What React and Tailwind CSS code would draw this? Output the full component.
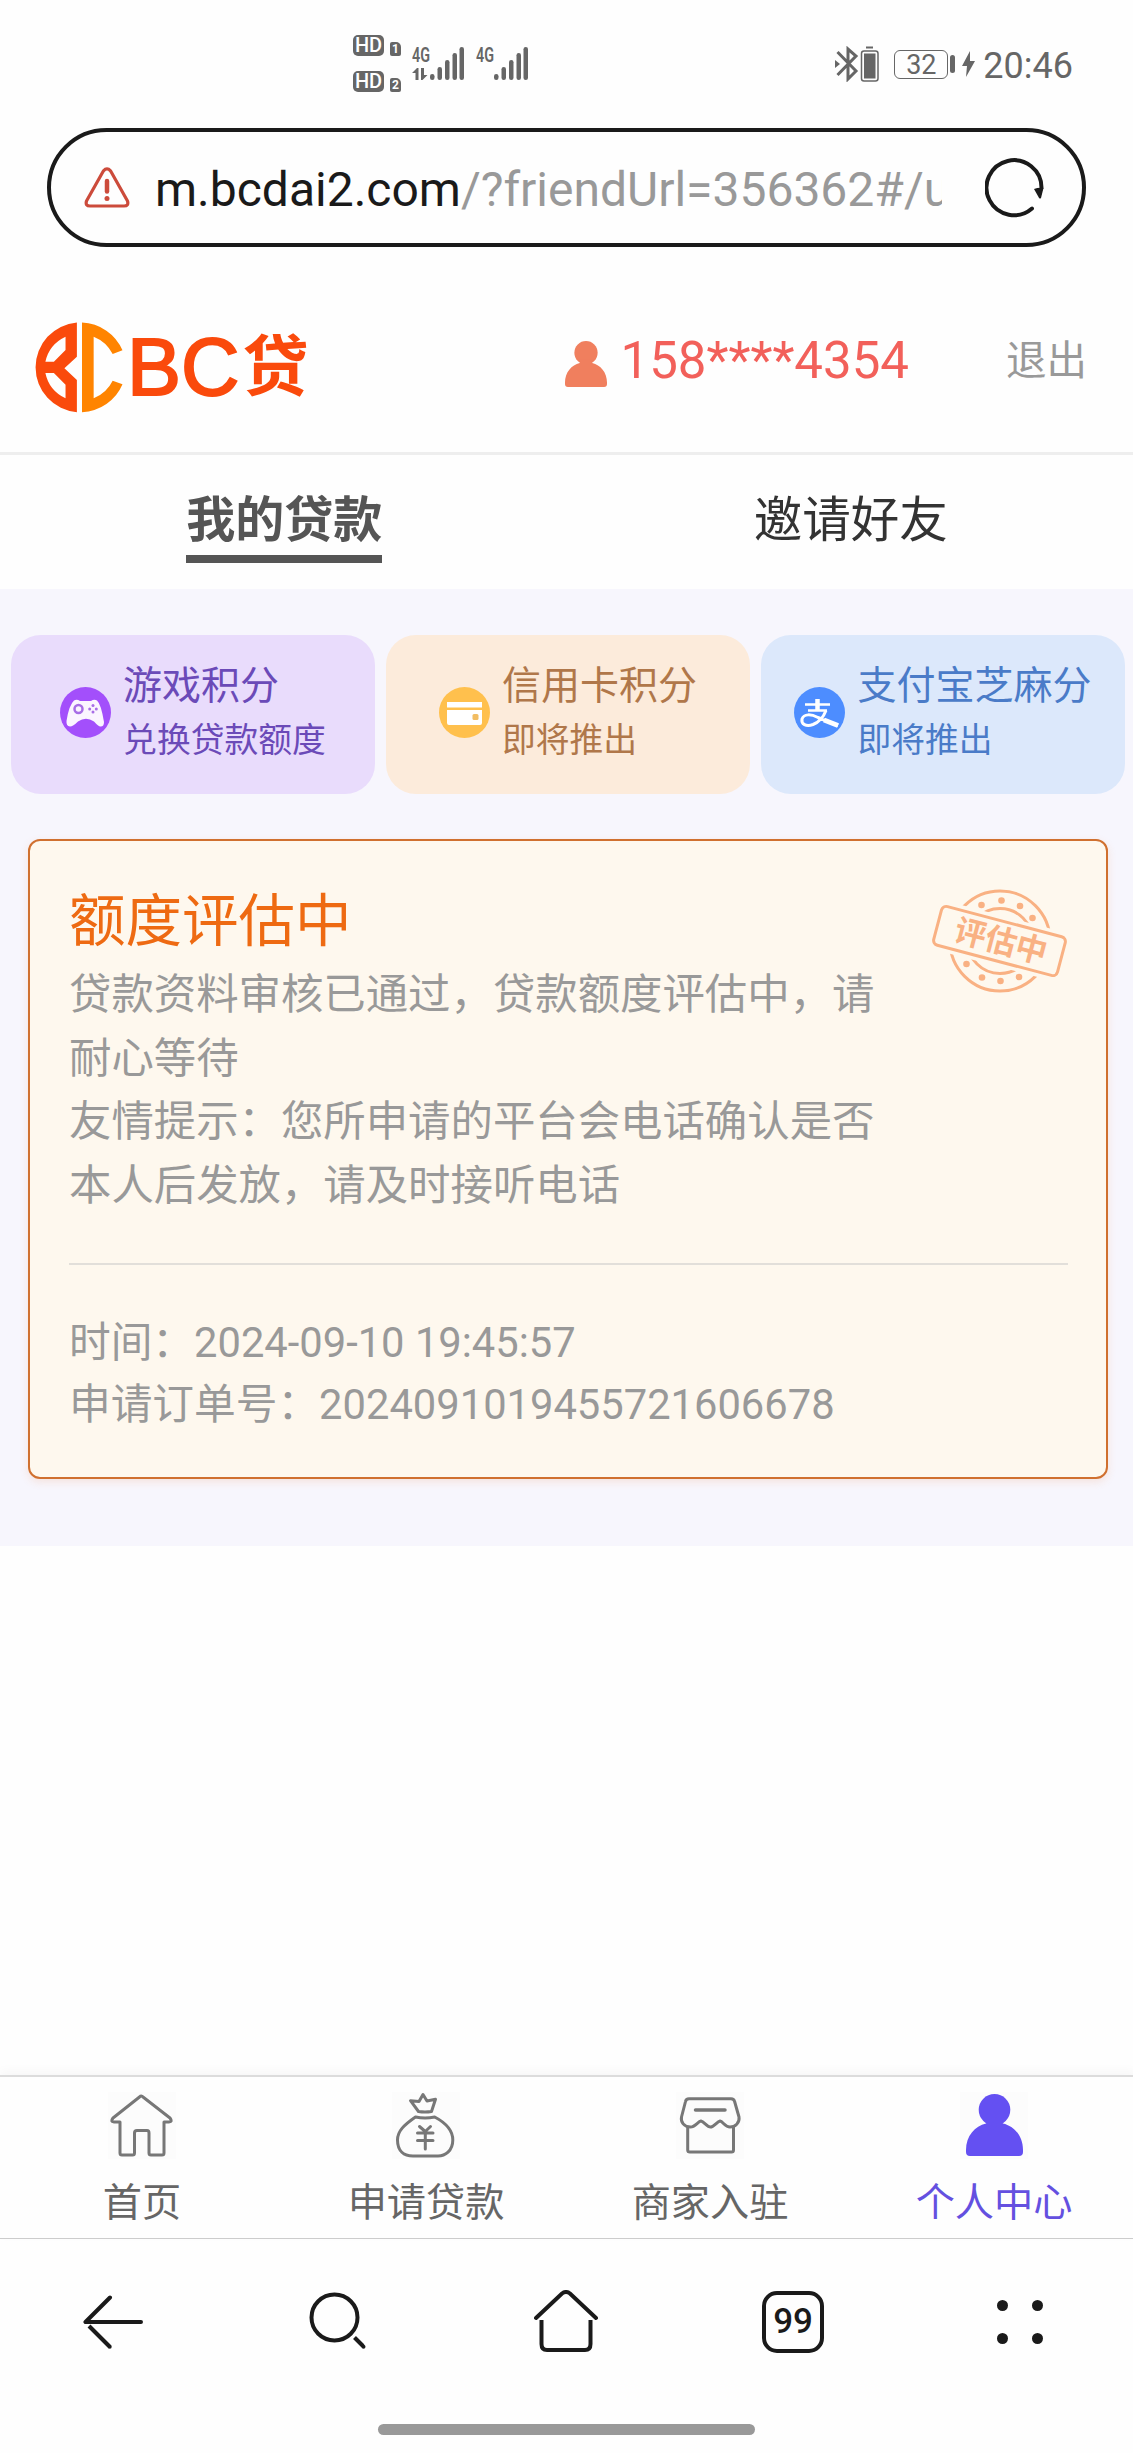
import React from 'react';

const POINT_CARDS = [
  { title: '游戏积分', desc: '兑换贷款额度', icon: 'game', className: 'bg-[#e9dcfc] text-[#6b4ab8]' },
  { title: '信用卡积分', desc: '即将推出', icon: 'card', className: 'bg-[#fcebdb] text-[#b0774a]' },
  { title: '支付宝芝麻分', desc: '即将推出', icon: 'alipay', className: 'bg-[#dce8fb] text-[#4a7bc8]' },
];

const NAV_ITEMS = [
  { label: '首页', icon: 'home' },
  { label: '申请贷款', icon: 'bag' },
  { label: '商家入驻', icon: 'store' },
  { label: '个人中心', icon: 'user', active: true },
];

const PersonIcon = ({ className }) => (
  <svg viewBox="0 0 57 62" preserveAspectRatio="none" fill="currentColor" className={className}>
    <circle cx="28.5" cy="15.8" r="15.8" />
    <path d="M0 56C0 42 9 32 20 29.500Q22 28 20 25H37Q35 28 37 29.500C48 32 57 42 57 56V58Q57 62 53 62H4Q0 62 0 58Z" />
  </svg>
);

const SimBadge = ({ n }) => (
  <div className="flex items-end gap-[6px] h-[21px]">
    <span className="w-[31px] h-[21px] rounded-[5px] bg-[#666] text-white text-[20px] leading-[21px] font-medium text-center">HD</span>
    <span className="w-[11px] h-[14px] rounded-[2px] rounded-tr-[5px] bg-[#666] text-white text-[12px] leading-[14px] font-bold text-center">{n}</span>
  </div>
);

const Signal = ({ data }) => (
  <svg width="53" height="40" viewBox="0 -4 53 40" fill="#666">
    <text x="0" y="16" fontSize="20" fontWeight="600" textLength="18" lengthAdjust="spacingAndGlyphs">4G</text>
    {data && <path d="M0 27L5 22H6.500V34H3.500V27ZM9 22H12V29H15.500L10.500 34H9Z" />}
    <rect x="18" y="28" width="4.500" height="6" rx="2.200" />
    <rect x="25.500" y="21" width="4.500" height="13" rx="2.200" />
    <rect x="33" y="14" width="4.500" height="20" rx="2.200" />
    <rect x="40.500" y="7" width="4.500" height="27" rx="2.200" />
    <rect x="47.500" y="1" width="4.500" height="33" rx="2.200" />
  </svg>
);

const StatusBar = () => (
  <div className="h-[128px] flex items-start justify-between pl-[353px] pr-[60px] text-[#666]">
    <div className="flex pt-[35px]">
      <div className="flex flex-col gap-[15px]">
        <SimBadge n="1" />
        <SimBadge n="2" />
      </div>
      <div className="flex items-start gap-[11px] pt-[7px] pl-[11px]">
        <Signal data />
        <Signal />
      </div>
    </div>
    <div className="flex items-center h-[128px]">
      <svg width="44" height="36" viewBox="0 0 44 36" fill="none" stroke="#666">
        <path d="M2.500 6L21 25L13 33V3L21 10L2.500 29" strokeWidth="3" />
        <path d="M0 14L5 18L0 22Z" fill="#666" stroke="none" />
        <path d="M31 1.500H38" strokeWidth="2" />
        <rect x="26.500" y="5" width="16.500" height="30" rx="2.500" strokeWidth="1.500" />
        <rect x="29" y="7.500" width="11.500" height="25" fill="#666" stroke="none" />
      </svg>
      <div className="ml-[15px] w-[54px] h-[29px] rounded-[6px] border-[1.5px] border-[#666] text-[27px] leading-[28px] text-center">32</div>
      <div className="ml-[2px] w-[5px] h-[18px] rounded-full bg-[#666]" />
      <svg width="13" height="26" viewBox="0 0 13 26" fill="#666" className="ml-[7px]">
        <path d="M8 0L0 15H5L4 26L13 10H8Z" />
      </svg>
      <span className="ml-[8px] text-[36px] leading-[36px] mt-[4px]">20:46</span>
    </div>
  </div>
);

const AddressBar = () => (
  <div className="mx-[47px] h-[119px] rounded-full border-4 border-[#1a1a1a] flex items-center pl-[33px] pr-[37px]">
    <svg width="46" height="41" viewBox="0 0 46 41" fill="none" stroke="#cc4b3b" strokeWidth="3.200" strokeLinejoin="round" strokeLinecap="round">
      <path d="M19.500 3.800Q23 0 26.500 3.800L43.500 34Q45 39 40 39H6Q1 39 2.500 34Z" />
      <path d="M23 14V24.500" strokeWidth="4.500" />
      <circle cx="23" cy="31.500" r="2.500" fill="#cc4b3b" stroke="none" />
    </svg>
    <div className="ml-[25px] mt-[4px] w-[787px] overflow-hidden whitespace-nowrap text-[48px] leading-[60px] text-[#999]">
      <span className="text-[#1a1a1a]">m.bcdai2.com</span>/?friendUrl=356362#/u
    </div>
    <svg width="60" height="60" viewBox="0 0 60 60" fill="none" className="ml-auto shrink-0">
      <path d="M47 50.500A27.500 27.500 0 1 1 56.500 30" stroke="#1a1a1a" strokeWidth="4" strokeLinecap="round" />
      <path d="M49 31Q54 29 58.500 30L56 40Q54.500 41.500 53.500 39Z" fill="#1a1a1a" />
    </svg>
  </div>
);

const Logo = () => (
  <div className="flex items-center h-[91px] text-[#fa4a0c]">
    <svg width="91" height="91" viewBox="0 0 89 91" preserveAspectRatio="none" className="mt-[2px]">
      <path fillRule="evenodd" fill="#fa4a0c" d="M43.900 .5V34.700L31.700 46.300L43.900 58V90.200A44 45 0 0 1 43.900 .5ZM32.800 14.700A36 36 0 0 0 13.100 39.700H21.400L32.800 28ZM13.100 51H21.400L32.800 62.700V76.300A36 36 0 0 1 13.100 51Z" />
      <path fill="#ff8400" d="M48.900 .5A45 45 0 0 1 88.500 28.300L78.900 32A36 36 0 0 0 60.300 14.700V76.300A36 36 0 0 0 78.900 58.700L88.500 62.300A45 45 0 0 1 48.900 90.200Z" />
    </svg>
    <span className="ml-[4px] font-['Liberation_Sans'] text-[81px] leading-[90px] [-webkit-text-stroke:2px_#fa4a0c]">BC</span>
    <span className="ml-[3px] mb-[11px] font-['Noto_Sans_CJK_SC'] font-bold text-[66px] leading-[90px]">贷</span>
  </div>
);

const Header = () => (
  <div className="h-[208px] border-b-[3px] border-[#eee] flex items-start pl-[32px] pr-[46px] pt-[74px]">
    <Logo />
    <div className="flex ml-auto items-center h-[80px]">
      <PersonIcon className="w-[42px] h-[46px] text-[#f07f5e] mt-[5px]" />
      <span className="ml-[14px] text-[51px] leading-[60px] text-[#f2605a]">158****4354</span>
    </div>
    <span className="ml-[97px] text-[40.5px] leading-[80px] text-[#999]">退出</span>
  </div>
);

const Tabs = () => (
  <div className="h-[134px] grid grid-cols-2 justify-items-center pl-[2px] pt-[34px] text-[49px] leading-[60px]">
    <span className="h-[74px] pt-[2px] -ml-px border-b-8 border-[#555] text-[#555] font-bold">我的贷款</span>
    <span className="text-[#333] pt-[2px] pl-px text-[48.5px]">邀请好友</span>
  </div>
);

const PointIcon = ({ name }) => {
  if (name === 'game') {
    return (
      <svg width="51" height="51" viewBox="0 0 51 51" className="shrink-0">
        <circle cx="25.500" cy="25.500" r="25.500" fill="#a34ffb" />
        <path d="M14 13.500Q17 12 20 14H31Q34 12 37 13.500Q41 17 44 35Q44 40 40 39.500Q38 39 34 34.500Q26 29 18 34.500Q13 39.500 10 39.500Q6 39 6.500 34Q9 18 14 13.500Z" fill="#fbf5ff" />
        <circle cx="18.500" cy="22" r="4" fill="none" stroke="#a86ee6" strokeWidth="2.500" />
        <g fill="#a86ee6">
          <circle cx="33" cy="18.500" r="1.500" />
          <circle cx="33" cy="25" r="1.500" />
          <circle cx="29.700" cy="22" r="1.500" />
          <circle cx="36.300" cy="22" r="1.500" />
        </g>
      </svg>
    );
  }
  if (name === 'card') {
    return (
      <svg width="51" height="51" viewBox="0 0 51 51" className="shrink-0">
        <circle cx="25.500" cy="25.500" r="25.500" fill="#ffc04d" />
        <path d="M8 15H43V20.500H8ZM8 23H43V36Q43 38 41 38H10Q8 38 8 36Z" fill="#fff" />
        <rect x="33.500" y="27" width="6" height="6" rx="1.500" fill="#f2bd62" />
      </svg>
    );
  }
  return (
    <svg width="51" height="51" viewBox="0 0 51 51" className="shrink-0">
      <circle cx="25.500" cy="25.500" r="25.500" fill="#4d8dff" />
      <g fill="none" stroke="#fff">
        <path d="M11 17.500H36M14 23.500H33" strokeWidth="2.500" />
        <path d="M23.500 12V23" strokeWidth="4.500" />
        <path d="M32 23.500Q28 34 19 37.500C12 40 7 37 8 32C10 26.500 17 27 24 30.500Q30 33 44 38.500" strokeWidth="3" />
        <path d="M30 33L44 38.500" strokeWidth="5" />
      </g>
    </svg>
  );
};

const PointCard = ({ card }) => (
  <div className={`h-[159px] rounded-[30px] flex items-center justify-center gap-[12px] pb-[5px] whitespace-nowrap ${card.className}`}>
    <PointIcon name={card.icon} />
    <div className="pt-px">
      <p className="text-[39px] leading-[56px]">{card.title}</p>
      <p className="text-[33.8px] leading-[54px]">{card.desc}</p>
    </div>
  </div>
);

const Stamp = () => (
  <svg width="138" height="104" viewBox="-1 -1 138 104" fill="none" stroke="#f9b183" strokeWidth="3" className="mt-[48px] mr-[-1px]">
    <circle cx="68" cy="51" r="50" />
    <circle cx="68" cy="51" r="32.500" />
    <g fill="#f9b183" stroke="none">
      <circle cx="49.500" cy="15" r="3.300" />
      <circle cx="69.500" cy="10.500" r="3.300" />
      <circle cx="88" cy="16" r="3.300" />
      <circle cx="100.500" cy="28" r="3.300" />
      <circle cx="34.500" cy="74" r="3.300" />
      <circle cx="50" cy="87.500" r="3.300" />
      <circle cx="68.500" cy="91" r="3.300" />
      <circle cx="87" cy="87" r="3.300" />
    </g>
    <g transform="rotate(14.8 67.500 51)">
      <rect x="0" y="26" width="135" height="50" fill="#fef8ee" stroke="none" />
      <rect x="3.500" y="31" width="128" height="40" rx="5" />
      <text x="69" y="62" fontSize="31.500" fontWeight="700" textAnchor="middle" fill="#f9b183" stroke="none">评估中</text>
    </g>
  </svg>
);

const OrderCard = () => (
  <div className="mt-[45px] ml-[28px] mr-[25px] h-[640px] rounded-[12px] border-2 border-[#d0702f] bg-[#fef8ee] shadow-[0_3px_8px_rgba(240,120,40,0.15)] pl-[39px] pr-[38px]">
    <div className="flex justify-between h-[424px] border-b-2 border-[#e2dfda]">
      <div className="w-[808px] pt-[43px]">
        <h2 className="text-[56.500px] leading-[76px] text-[#ee6a12]">额度评估中</h2>
        <div className="mt-[3px] text-[42.4px] leading-[63.6px] text-[#999]">
          <p>贷款资料审核已通过，贷款额度评估中，请耐心等待</p>
          <p>友情提示：您所申请的平台会电话确认是否本人后发放，请及时接听电话</p>
        </div>
      </div>
      <Stamp />
    </div>
    <div className="pt-[47px] text-[41.7px] leading-[62px] text-[#999]">
      <p>时间：2024-09-10 19:45:57</p>
      <p>申请订单号：2024091019455721606678</p>
    </div>
  </div>
);

const NavIcon = ({ name }) => {
  if (name === 'user') {
    return (
      <div className="w-[68px] h-[67px] bg-[#fcfcfc] flex justify-center pt-[2px]">
        <PersonIcon className="w-[57px] h-[62px] text-[#6450f2]" />
      </div>
    );
  }
  return (
    <svg width="68" height="67" viewBox="0 0 68 67" fill="none" stroke="#777" strokeWidth="3" strokeLinejoin="round" strokeLinecap="round" className="bg-[#fcfcfc]">
      {name === 'home' && (
        <path d="M31.500 5Q33.300 3 35 5L62 26Q65 30 61 30H56V61Q56 63 54 63H43Q41 63 41 61V41Q41 38.500 39 38.500H29Q26.500 38.500 26.500 41V61Q26.500 63 24.500 63H14Q12 63 12 61V30H6Q2 30 5 26Z" />
      )}
      {name === 'bag' && (
        <>
          <path d="M31 2.500L35 9L43.500 7.300L39.500 19.500Q33 20.500 26.500 19.500L18.500 8.700L27 9.500Z" />
          <path d="M23.500 25Q33 27 42.700 25C54 31 60.800 39 60.800 48C60.800 59 53 64 46 64H21C12 64 5.500 59 5.500 48C5.500 39 12 33 23.500 25Z" />
          <path d="M27.500 34.500L33.300 39.500L38.500 34.500M25.500 41H41M25.500 48.500H41M33.300 40V57" />
        </>
      )}
      {name === 'store' && (
        <>
          <path d="M13 6.700H55Q58 6.700 58.600 9.500L63 25C64 31 59 35 54 35C49 35 47 29.500 44 29C41 29.500 38 35 34.400 35C31 35 28 29.500 25 29C22 29.500 19 35 14.500 35C8 35 4.500 30 5.500 25L9.500 9.500Q10 6.700 13 6.700Z" />
          <path d="M11.700 35V58Q11.700 60 14 60H55.500Q57.500 60 57.500 58V35" />
          <path d="M19.500 18H49" strokeWidth="3.500" />
        </>
      )}
    </svg>
  );
};

const BottomNav = () => (
  <div className="h-[164px] border-t-2 border-b border-t-[#dcdcdc] border-b-[#ccc] shadow-[0_-4px_10px_rgba(0,0,0,0.03)] grid grid-cols-4 -mr-[3px] pt-[15px] text-[39.2px] leading-[54px]">
    {NAV_ITEMS.map((item) => (
      <div key={item.label} className={`flex flex-col items-center gap-[17px] ${item.active ? 'text-[#6450e0]' : 'text-[#666]'}`}>
        <NavIcon name={item.icon} />
        <span>{item.label}</span>
      </div>
    ))}
  </div>
);

const BrowserBar = () => (
  <div className="h-[165px] grid grid-cols-5 justify-items-center items-center text-[#1a1a1a]">
    <svg width="60" height="55" viewBox="0 0 60 55" fill="none" stroke="currentColor" strokeWidth="4" className="mt-[2px]">
      <path d="M27 2.500L2.500 27H58" strokeLinecap="round" strokeLinejoin="round" />
      <path d="M6 31L27 52" />
      <circle cx="26.800" cy="51.800" r="1.900" fill="currentColor" stroke="none" />
    </svg>
    <svg width="58" height="59" viewBox="0 0 58 59" fill="none" stroke="currentColor" strokeWidth="4" className="mr-[4px]">
      <circle cx="25.500" cy="25.500" r="23" />
      <path d="M45.500 45.500L54 54" />
      <circle cx="54.500" cy="54.800" r="2" fill="currentColor" stroke="none" />
    </svg>
    <svg width="64" height="63" viewBox="0 0 64 63" fill="none" stroke="currentColor" strokeWidth="4">
      <path d="M2 28L28 3.500Q32 .5 36 3.500L62 28" strokeLinecap="round" />
      <path d="M7.500 30V54Q7.500 60 13 60H51Q56.500 60 56.500 54V30" />
    </svg>
    <div className="w-[62px] h-[62px] rounded-[15px] border-4 border-[#1a1a1a] text-center text-[35px] leading-[54px] font-medium">99</div>
    <div className="grid grid-cols-2 gap-x-[24px] gap-y-[22px]">
      <span className="size-[11px] rounded-full bg-[#1a1a1a]" />
      <span className="size-[11px] rounded-full bg-[#1a1a1a]" />
      <span className="size-[11px] rounded-full bg-[#1a1a1a]" />
      <span className="size-[11px] rounded-full bg-[#1a1a1a]" />
    </div>
  </div>
);

export default function App() {
  return (
    <div className="w-[1133px] h-[2453px] flex flex-col bg-[#fefefe] overflow-hidden font-[Roboto,'Noto_Sans_CJK_SC',sans-serif]">
      <StatusBar />
      <AddressBar />
      <Header />
      <Tabs />
      <div className="h-[957px] bg-[#f7f6fd] pt-[46px]">
        <div className="grid grid-cols-3 gap-[11px] pl-[11px] pr-[8px]">
          {POINT_CARDS.map((card) => (
            <PointCard key={card.title} card={card} />
          ))}
        </div>
        <OrderCard />
      </div>
      <div className="mt-auto">
        <BottomNav />
        <BrowserBar />
        <div className="h-[49px] pt-[20px]">
          <div className="mx-auto w-[377px] h-[11px] rounded-full bg-[#999]" />
        </div>
      </div>
    </div>
  );
}
